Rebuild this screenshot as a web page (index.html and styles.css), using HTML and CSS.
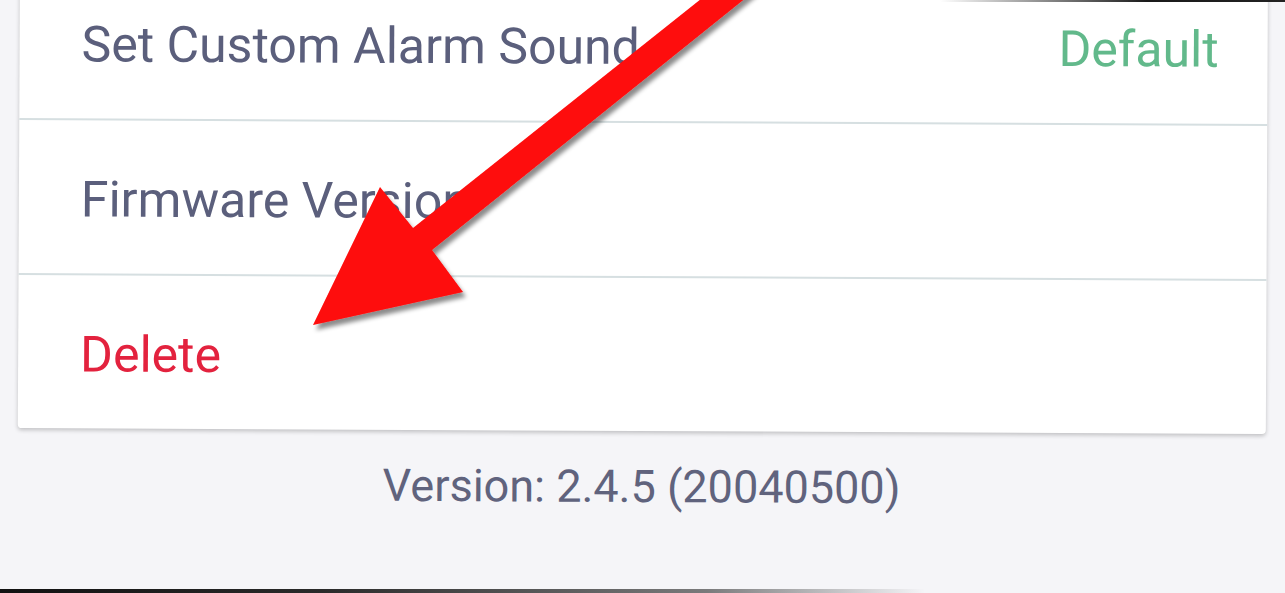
FILE: index.html
```html
<!DOCTYPE html>
<html lang="en">
<head>
    <meta charset="UTF-8">
    <meta name="viewport" content="width=device-width, initial-scale=1.0">
    <title>Device Settings</title>
    <link rel="stylesheet" href="styles.css">
</head>
<body>
    <div class="screen">
        <!-- 設定リスト -->
        <section class="settings-card">
            <div class="setting-row">
                <span class="setting-label">Set Custom Alarm Sound</span>
                <span class="setting-value">Default</span>
            </div>
            <div class="setting-row">
                <span class="setting-label">Firmware Version</span>
            </div>
            <div class="setting-row">
                <span class="setting-label danger">Delete</span>
            </div>
        </section>
        <p class="app-version">Version: 2.4.5 (20040500)</p>
    </div>

    <!-- 赤い矢印 (注釈) -->
    <svg class="arrow" width="1285" height="593" viewBox="0 0 1285 593" aria-hidden="true">
        <defs>
            <filter id="arrow-shadow" x="-20%" y="-20%" width="140%" height="140%">
                <feDropShadow dx="3" dy="5" stdDeviation="2" flood-color="#000" flood-opacity="0.45"/>
            </filter>
        </defs>
        <polygon points="750,-40 413,228 380,187 313,325 463,292 432,250 793,-40" fill="#fe0909" filter="url(#arrow-shadow)"/>
    </svg>

    <div class="edge-top"></div>
    <div class="edge-bottom"></div>
</body>
</html>
```

FILE: styles.css
```css
/* 基本のスタイル設定 */
html, body {
    margin: 0;
    padding: 0;
    height: 593px;
    overflow: hidden;
}

body {
    position: relative;
    font-family: Roboto, 'Noto Sans', 'Liberation Sans', sans-serif;
    background-color: #f5f5f8;
    color: #5b5f7c;
}

/* 画面全体 (少し傾いている) */
.screen {
    display: flex;
    flex-direction: column;
    margin-top: -35px;
    padding: 0 17px 0 20px;
    transform: rotate(0.27deg);
    transform-origin: left top;
}

/* 設定カード */
.settings-card {
    background-color: #fff;
    border-radius: 0 0 4px 4px;
    box-shadow: 0px 2px 4px rgba(0, 0, 0, 0.22);
}

.setting-row {
    display: flex;
    align-items: center;
    justify-content: space-between;
    height: 155px;
    box-sizing: border-box;
    padding: 5px 49px 0 62px;
    border-bottom: 2px solid #d6dfe1;
}

.setting-row:last-child {
    border-bottom: none;
    height: 153px;
}

.setting-label {
    font-size: 50px;
    color: #5b5f7c;
}

.setting-value {
    font-size: 50px;
    color: #62b98b; /* 緑 */
}

.danger {
    color: #e3223e; /* 赤 */
}

/* バージョン表記 */
.app-version {
    margin: 30px 0 0;
    text-align: center;
    font-size: 45px;
    line-height: 52px;
    color: #60637d;
}

/* 注釈の矢印 */
.arrow {
    position: absolute;
    left: 0;
    top: 0;
}

/* 写真の縁 */
.edge-top {
    position: absolute;
    top: 0;
    left: 940px;
    right: 0;
    height: 2px;
    background: linear-gradient(to right, rgba(20, 20, 20, 0), #1a1a1a 60%, #222 100%);
}

.edge-bottom {
    position: absolute;
    left: 0;
    right: 0;
    bottom: 0;
    height: 4px;
    background: linear-gradient(to right, #111 0%, #2a2a2a 25%, rgba(40, 40, 40, 0.6) 55%, rgba(40, 40, 40, 0) 72%);
}
```
